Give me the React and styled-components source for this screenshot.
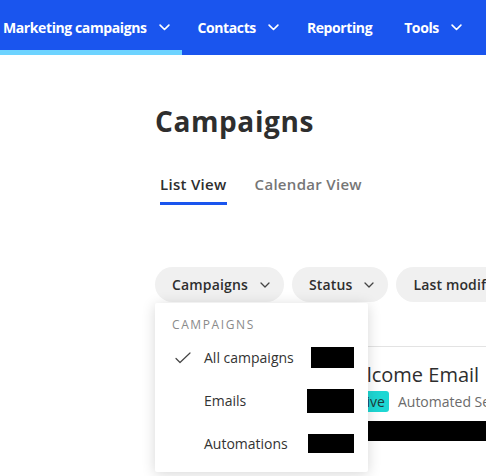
import React from "react";
import styled, { createGlobalStyle } from "styled-components";

const Global = createGlobalStyle`
  html, body { margin: 0; padding: 0; background: #fff; overflow: hidden; }
  body { font-family: "Open Sans", "Liberation Sans", sans-serif; color: #333; width: 486px; height: 476px; }
  * { box-sizing: border-box; }
`;

const Nav = styled.nav`
  display: flex;
  height: 55px;
  background: #1a55ee;
  white-space: nowrap;
`;

const NavItem = styled.div`
  display: flex;
  align-items: center;
  gap: 12px;
  height: 55px;
  padding: 5px ${p => (p.$chevron ? 12 : 16)}px 0 ${p => (p.$first ? 3 : 16)}px;
  color: #fff;
  font-weight: 700;
  font-size: 14px;
  letter-spacing: -0.4px;
  border-bottom: 5px solid ${p => (p.$active ? "#6dd3ff" : "transparent")};
`;

const Main = styled.main`
  padding-left: 155px;
`;

const Title = styled.h1`
  margin: 0;
  padding-top: 47px;
  font-size: 28px;
  font-weight: 700;
  line-height: 38px;
  color: #2e2e2e;
  letter-spacing: 0.6px;
`;

const Tabs = styled.div`
  display: flex;
  gap: 28px;
  margin-top: 34px;
  padding-left: 5px;
`;

const Tab = styled.div`
  font-size: 15px;
  font-weight: 600;
  line-height: 20px;
  letter-spacing: 0.3px;
  padding-bottom: 8px;
  color: ${p => (p.$active ? "#2e2e2e" : "#767676")};
  border-bottom: 3px solid ${p => (p.$active ? "#1a55ee" : "transparent")};
`;

const FilterBar = styled.div`
  position: relative;
  display: flex;
  gap: 8px;
  margin-top: 62px;
  white-space: nowrap;
`;

const Pill = styled.div`
  display: flex;
  align-items: center;
  gap: 12px;
  height: 35px;
  padding: 0 14px 0 17px;
  border-radius: 18px;
  background: #f0f0f0;
  font-size: 14px;
  font-weight: 600;
  letter-spacing: 0.15px;
  color: #2e2e2e;
  flex-shrink: 0;
`;

const Menu = styled.div`
  position: absolute;
  top: 36px;
  left: 0;
  width: 213px;
  padding: 13px 14px 7px 0;
  background: #fff;
  border-radius: 2px;
  box-shadow: 0 2px 14px rgba(0, 0, 0, 0.16);
  z-index: 2;
`;

const MenuHeader = styled.div`
  padding-left: 17px;
  font-size: 12px;
  letter-spacing: 1.6px;
  color: #8a8a8a;
  line-height: 18px;
  margin-bottom: 2px;
`;

const MenuItem = styled.div`
  display: flex;
  align-items: center;
  height: 43px;
  padding-left: 20px;
  font-size: 14px;
  color: #333;
`;

const CheckSlot = styled.span`
  width: 29px;
  display: flex;
  align-items: center;
`;

const Redacted = styled.span`
  margin-left: auto;
  display: block;
  background: #000;
  width: ${p => p.$w}px;
  height: ${p => p.$h}px;
`;

const Card = styled.section`
  margin-top: 44px;
  border-top: 1px solid #e3e3e3;
  padding: 14px 0 0 182px;
  white-space: nowrap;
`;

const RowTitle = styled.div`
  font-size: 20px;
  font-weight: 500;
  color: #2e2e2e;
  line-height: 28px;
`;

const Meta = styled.div`
  display: flex;
  align-items: center;
  gap: 9px;
  margin-top: 2px;
  padding-left: 5px;
  font-size: 14px;
  color: #6b6b6b;
`;

const Badge = styled.span`
  background: #1ed7d3;
  color: #1e3a3a;
  border-radius: 3px;
  padding: 0 4px;
  line-height: 21px;
  font-size: 14px;
`;

const Bar = styled.div`
  margin-top: 9px;
  width: 260px;
  height: 20px;
  background: #000;
`;

const Chevron = ({ size = 11, color = "#fff", width = 1.5 }) => (
  <svg width={size} height={size * 0.6} viewBox="0 0 10 6" fill="none">
    <polyline points="1,1 5,5 9,1" stroke={color} strokeWidth={width} strokeLinecap="round" strokeLinejoin="round" />
  </svg>
);

const Check = () => (
  <svg width="16" height="12" viewBox="0 0 16 12" fill="none">
    <polyline points="1,6.5 5,10.5 15,1" stroke="#444" strokeWidth="1.2" strokeLinecap="round" strokeLinejoin="round" />
  </svg>
);

export default function App() {
  return (
    <>
      <Global />
      <Nav>
        <NavItem $first $active $chevron>Marketing campaigns <Chevron /></NavItem>
        <NavItem $chevron>Contacts <Chevron /></NavItem>
        <NavItem>Reporting</NavItem>
        <NavItem $chevron>Tools <Chevron /></NavItem>
      </Nav>
      <Main>
        <Title>Campaigns</Title>
        <Tabs>
          <Tab $active>List View</Tab>
          <Tab>Calendar View</Tab>
        </Tabs>
        <FilterBar>
          <Pill>Campaigns <Chevron size={10} color="#444" width={1.3} /></Pill>
          <Pill>Status <Chevron size={10} color="#444" width={1.3} /></Pill>
          <Pill>Last modified <Chevron size={10} color="#444" width={1.3} /></Pill>
          <Menu>
            <MenuHeader>CAMPAIGNS</MenuHeader>
            <MenuItem><CheckSlot><Check /></CheckSlot>All campaigns<Redacted $w={43} $h={21} /></MenuItem>
            <MenuItem><CheckSlot />Emails<Redacted $w={47} $h={24} /></MenuItem>
            <MenuItem><CheckSlot />Automations<Redacted $w={46} $h={19} /></MenuItem>
          </Menu>
        </FilterBar>
        <Card>
          <RowTitle>Welcome Email</RowTitle>
          <Meta><Badge>Active</Badge>Automated Series</Meta>
          <Bar />
        </Card>
      </Main>
    </>
  );
}
